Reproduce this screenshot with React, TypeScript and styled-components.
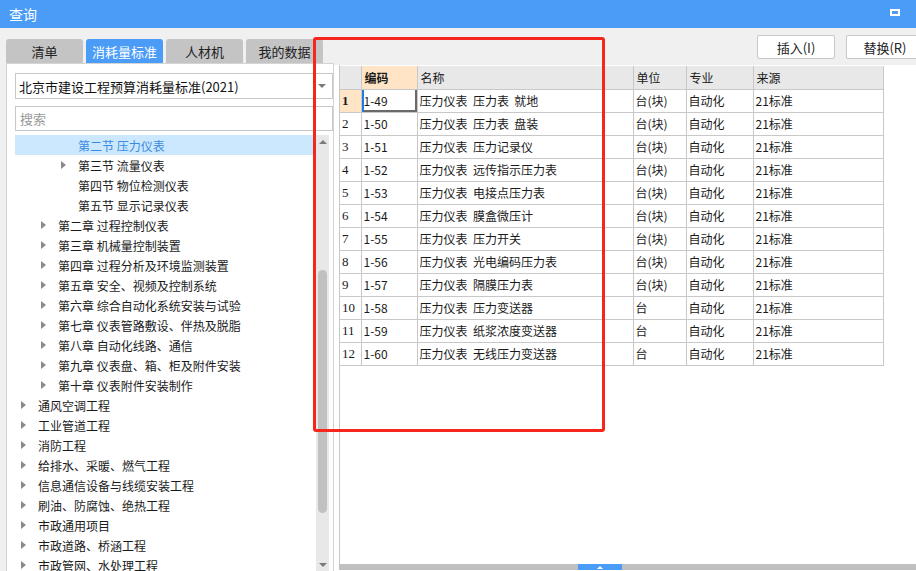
import styled, { createGlobalStyle } from "styled-components";

const GlobalStyle = createGlobalStyle`
  html, body {
    margin: 0;
    padding: 0;
    overflow: hidden;
    background: #f0f0f0;
  }
  * {
    box-sizing: border-box;
  }
`;

const FONT = `"Noto Sans CJK SC", "Noto Sans", sans-serif`;
const BLUE = "#4a9cf7";

interface TreeNode {
  label: string;
  level: number;
  arrow?: boolean;
  selected?: boolean;
}

const treeNodes: TreeNode[] = [
  { label: "第二节 压力仪表", level: 2, selected: true },
  { label: "第三节 流量仪表", level: 2, arrow: true },
  { label: "第四节 物位检测仪表", level: 2 },
  { label: "第五节 显示记录仪表", level: 2 },
  { label: "第二章 过程控制仪表", level: 1, arrow: true },
  { label: "第三章 机械量控制装置", level: 1, arrow: true },
  { label: "第四章 过程分析及环境监测装置", level: 1, arrow: true },
  { label: "第五章 安全、视频及控制系统", level: 1, arrow: true },
  { label: "第六章 综合自动化系统安装与试验", level: 1, arrow: true },
  { label: "第七章 仪表管路敷设、伴热及脱脂", level: 1, arrow: true },
  { label: "第八章 自动化线路、通信", level: 1, arrow: true },
  { label: "第九章 仪表盘、箱、柜及附件安装", level: 1, arrow: true },
  { label: "第十章 仪表附件安装制作", level: 1, arrow: true },
  { label: "通风空调工程", level: 0, arrow: true },
  { label: "工业管道工程", level: 0, arrow: true },
  { label: "消防工程", level: 0, arrow: true },
  { label: "给排水、采暖、燃气工程", level: 0, arrow: true },
  { label: "信息通信设备与线缆安装工程", level: 0, arrow: true },
  { label: "刷油、防腐蚀、绝热工程", level: 0, arrow: true },
  { label: "市政通用项目", level: 0, arrow: true },
  { label: "市政道路、桥涵工程", level: 0, arrow: true },
  { label: "市政管网、水处理工程", level: 0, arrow: true },
];

const names = [
  ["1-49", "压力表  就地", "台(块)"],
  ["1-50", "压力表  盘装", "台(块)"],
  ["1-51", "压力记录仪", "台(块)"],
  ["1-52", "远传指示压力表", "台(块)"],
  ["1-53", "电接点压力表", "台(块)"],
  ["1-54", "膜盒微压计", "台(块)"],
  ["1-55", "压力开关", "台(块)"],
  ["1-56", "光电编码压力表", "台(块)"],
  ["1-57", "隔膜压力表", "台(块)"],
  ["1-58", "压力变送器", "台"],
  ["1-59", "纸浆浓度变送器", "台"],
  ["1-60", "无线压力变送器", "台"],
];

const tabs = ["清单", "消耗量标准", "人材机", "我的数据"];

export default function App() {
  return (
    <>
      <GlobalStyle />
      <Window>
        <TitleBar>
          <TitleText>查询</TitleText>
          <MaxIcon />
        </TitleBar>
        <Body>
          <LeftPane>
            <TabRow>
              {tabs.map((t, i) => (
                <Tab key={t} $active={i === 1}>
                  {t}
                </Tab>
              ))}
            </TabRow>
            <Panel>
              <Select>
                <span>北京市建设工程预算消耗量标准(2021)</span>
                <SmallTriangle $dir="down" />
              </Select>
              <Search placeholder="搜索" />
              <TreeArea>
                <TreeList>
                  {treeNodes.map((n) => (
                    <TreeRow key={n.label} $level={n.level} $selected={!!n.selected}>
                      <ArrowSlot>{n.arrow && <RightArrow />}</ArrowSlot>
                      <TreeLabel>{n.label}</TreeLabel>
                    </TreeRow>
                  ))}
                </TreeList>
                <VScroll>
                  <ScrollBtn>
                    <SmallTriangle $dir="up" />
                  </ScrollBtn>
                  <ThumbTrack>
                    <Thumb />
                  </ThumbTrack>
                  <ScrollBtn>
                    <SmallTriangle $dir="down" />
                  </ScrollBtn>
                </VScroll>
              </TreeArea>
            </Panel>
          </LeftPane>
          <RightPane>
            <Toolbar>
              <ToolButton>插入(I)</ToolButton>
              <ToolButton>替换(R)</ToolButton>
            </Toolbar>
            <GridWrap>
              <GridInner>
                <Table>
                  <colgroup>
                    <col style={{ width: 21 }} />
                    <col style={{ width: 56 }} />
                    <col style={{ width: 216 }} />
                    <col style={{ width: 53 }} />
                    <col style={{ width: 67 }} />
                    <col style={{ width: 130 }} />
                  </colgroup>
                  <thead>
                    <tr>
                      <HeadCell />
                      <HeadCell $active>编码</HeadCell>
                      <HeadCell>名称</HeadCell>
                      <HeadCell>单位</HeadCell>
                      <HeadCell>专业</HeadCell>
                      <HeadCell>来源</HeadCell>
                    </tr>
                  </thead>
                  <tbody>
                    {names.map(([code, name, unit], i) => (
                      <tr key={code}>
                        <NumCell $active={i === 0}>{i + 1}</NumCell>
                        <CodeCell $focused={i === 0}>{code}</CodeCell>
                        <Cell>{"压力仪表  " + name}</Cell>
                        <Cell>{unit}</Cell>
                        <Cell>自动化</Cell>
                        <Cell>21标准</Cell>
                      </tr>
                    ))}
                  </tbody>
                </Table>
              </GridInner>
              <Splitter>
                <SplitHandle>
                  <HandleArrow />
                </SplitHandle>
              </Splitter>
            </GridWrap>
          </RightPane>
        </Body>
        <Annotation />
      </Window>
    </>
  );
}

const Window = styled.div`
  position: relative;
  width: 916px;
  height: 571px;
  overflow: hidden;
  display: flex;
  flex-direction: column;
  font-family: ${FONT};
  color: #1a1a1a;
`;

const TitleBar = styled.div`
  height: 28px;
  flex: none;
  background: ${BLUE};
  display: flex;
  align-items: center;
  justify-content: space-between;
  padding: 0 16px 0 9px;
`;

const TitleText = styled.span`
  color: #fff;
  font-size: 14px;
`;

const MaxIcon = styled.span`
  width: 10px;
  height: 7px;
  border: 2px solid #fff;
  margin-bottom: 4px;
`;

const Body = styled.div`
  flex: 1;
  min-height: 0;
  display: flex;
`;

const LeftPane = styled.div`
  width: 334px;
  flex: none;
  padding: 11px 0 0 6px;
  display: flex;
  flex-direction: column;
`;

const TabRow = styled.div`
  display: flex;
  gap: 3px;
  height: 24px;
  flex: none;
`;

const Tab = styled.div<{ $active: boolean }>`
  width: 77px;
  border-radius: 3px 3px 0 0;
  background: ${({ $active }) => ($active ? BLUE : "#c4c4c4")};
  color: ${({ $active }) => ($active ? "#fff" : "#222")};
  font-size: 13px;
  display: flex;
  align-items: center;
  justify-content: center;
`;

const Panel = styled.div`
  flex: 1;
  min-height: 0;
  background: #fff;
  border: 1px solid #d4d4d4;
  border-bottom: none;
  padding: 9px 0 0 8px;
  display: flex;
  flex-direction: column;
`;

const Select = styled.div`
  height: 26px;
  flex: none;
  border: 1px solid #c8c8c8;
  display: flex;
  align-items: center;
  justify-content: space-between;
  padding: 0 6px 0 3px;
  font-size: 13px;
  color: #111;
`;

const Search = styled.input`
  margin-top: 7px;
  height: 25px;
  flex: none;
  border: 1px solid #c8c8c8;
  padding: 0 4px;
  font-family: ${FONT};
  font-size: 13px;
  outline: none;
  &::placeholder {
    color: #9a9a9a;
  }
`;

const TreeArea = styled.div`
  flex: 1;
  min-height: 0;
  margin-top: 4px;
  display: flex;
`;

const TreeList = styled.div`
  flex: 1;
  overflow: hidden;
  padding-right: 2px;
`;

const TreeRow = styled.div<{ $level: number; $selected: boolean }>`
  height: 20px;
  display: flex;
  align-items: center;
  padding-left: ${({ $level }) => 3 + $level * 20}px;
  background: ${({ $selected }) => ($selected ? "#cce8ff" : "transparent")};
  color: ${({ $selected }) => ($selected ? "#3a8ae0" : "#1a1a1a")};
  font-size: 12px;
  white-space: nowrap;
`;

const ArrowSlot = styled.span`
  width: 20px;
  flex: none;
  display: flex;
  align-items: center;
  padding-left: 3px;
`;

const RightArrow = styled.span`
  width: 0;
  height: 0;
  border-top: 4px solid transparent;
  border-bottom: 4px solid transparent;
  border-left: 5px solid #8a8a8a;
`;

const TreeLabel = styled.span``;

const SmallTriangle = styled.span<{ $dir: "up" | "down" }>`
  width: 0;
  height: 0;
  border-left: 4px solid transparent;
  border-right: 4px solid transparent;
  ${({ $dir }) =>
    $dir === "down" ? "border-top: 4px solid #7a7a7a;" : "border-bottom: 4px solid #7a7a7a;"}
`;

const VScroll = styled.div`
  width: 13px;
  flex: none;
  background: #e8e8e8;
  display: flex;
  flex-direction: column;
  align-items: center;
  margin-right: 4px;
`;

const ScrollBtn = styled.div`
  height: 13px;
  flex: none;
  display: flex;
  align-items: center;
  justify-content: center;
`;

const ThumbTrack = styled.div`
  flex: 1;
  width: 100%;
  display: flex;
  justify-content: center;
  padding-top: 122px;
  padding-bottom: 45px;
`;

const Thumb = styled.div`
  width: 9px;
  height: 100%;
  border-radius: 5px;
  background: #c1c1c1;
`;

const RightPane = styled.div`
  flex: 1;
  min-width: 0;
  display: flex;
  flex-direction: column;
`;

const Toolbar = styled.div`
  height: 37px;
  flex: none;
  display: flex;
  justify-content: flex-end;
  align-items: flex-start;
  gap: 11px;
  padding-top: 7px;
  margin-right: -8px;
`;

const ToolButton = styled.div`
  width: 78px;
  height: 24px;
  background: #fff;
  border: 1px solid #c8c8c8;
  border-radius: 2px;
  font-size: 13px;
  color: #222;
  display: flex;
  align-items: center;
  justify-content: center;
`;

const GridWrap = styled.div`
  flex: 1;
  min-height: 0;
  background: #fff;
  padding-left: 5px;
  display: flex;
  flex-direction: column;
`;

const GridInner = styled.div`
  flex: 1;
  min-height: 0;
  border-left: 1px solid #c8c8c8;
  padding-top: 1px;
`;

const Table = styled.table`
  border-collapse: collapse;
  table-layout: fixed;
  width: 543px;
  font-size: 12px;
`;

const HeadCell = styled.th<{ $active?: boolean }>`
  height: 23px;
  padding: 0 0 0 3px;
  text-align: left;
  font-weight: ${({ $active }) => ($active ? 700 : 400)};
  background: ${({ $active }) => ($active ? "#ffe4c6" : "#e8e8e8")};
  border: 1px solid #c8c8c8;
  border-top: none;
  border-left: none;
`;

const Cell = styled.td`
  height: 23px;
  padding: 0 0 0 2px;
  border: 1px solid #c8c8c8;
  white-space: pre;
  overflow: hidden;
`;

const NumCell = styled(Cell)<{ $active: boolean }>`
  border-left: none;
  font-family: "Liberation Serif", serif;
  font-size: 13px;
  font-weight: ${({ $active }) => ($active ? 700 : 400)};
  background: ${({ $active }) => ($active ? "#ffe4c6" : "#fff")};
`;

const CodeCell = styled(Cell)<{ $focused: boolean }>`
  ${({ $focused }) =>
    $focused
      ? `box-shadow: inset 2px 0 0 #1e7be6, inset 0 -2px 0 #6a6a6a, inset -2px 0 0 #6a6a6a;`
      : ""}
`;

const Splitter = styled.div`
  height: 6px;
  flex: none;
  margin-bottom: 1px;
  background: #c0c0c0;
  display: flex;
  padding-left: 239px;
`;

const SplitHandle = styled.div`
  width: 44px;
  background: ${BLUE};
  display: flex;
  align-items: center;
  justify-content: center;
`;

const HandleArrow = styled.span`
  width: 0;
  height: 0;
  border-left: 3px solid transparent;
  border-right: 3px solid transparent;
  border-bottom: 3px solid #fff;
`;

const Annotation = styled.div`
  position: absolute;
  left: 313px;
  top: 37px;
  width: 292px;
  height: 395px;
  border: 3px solid #f5261c;
  border-radius: 3px;
  pointer-events: none;
`;
